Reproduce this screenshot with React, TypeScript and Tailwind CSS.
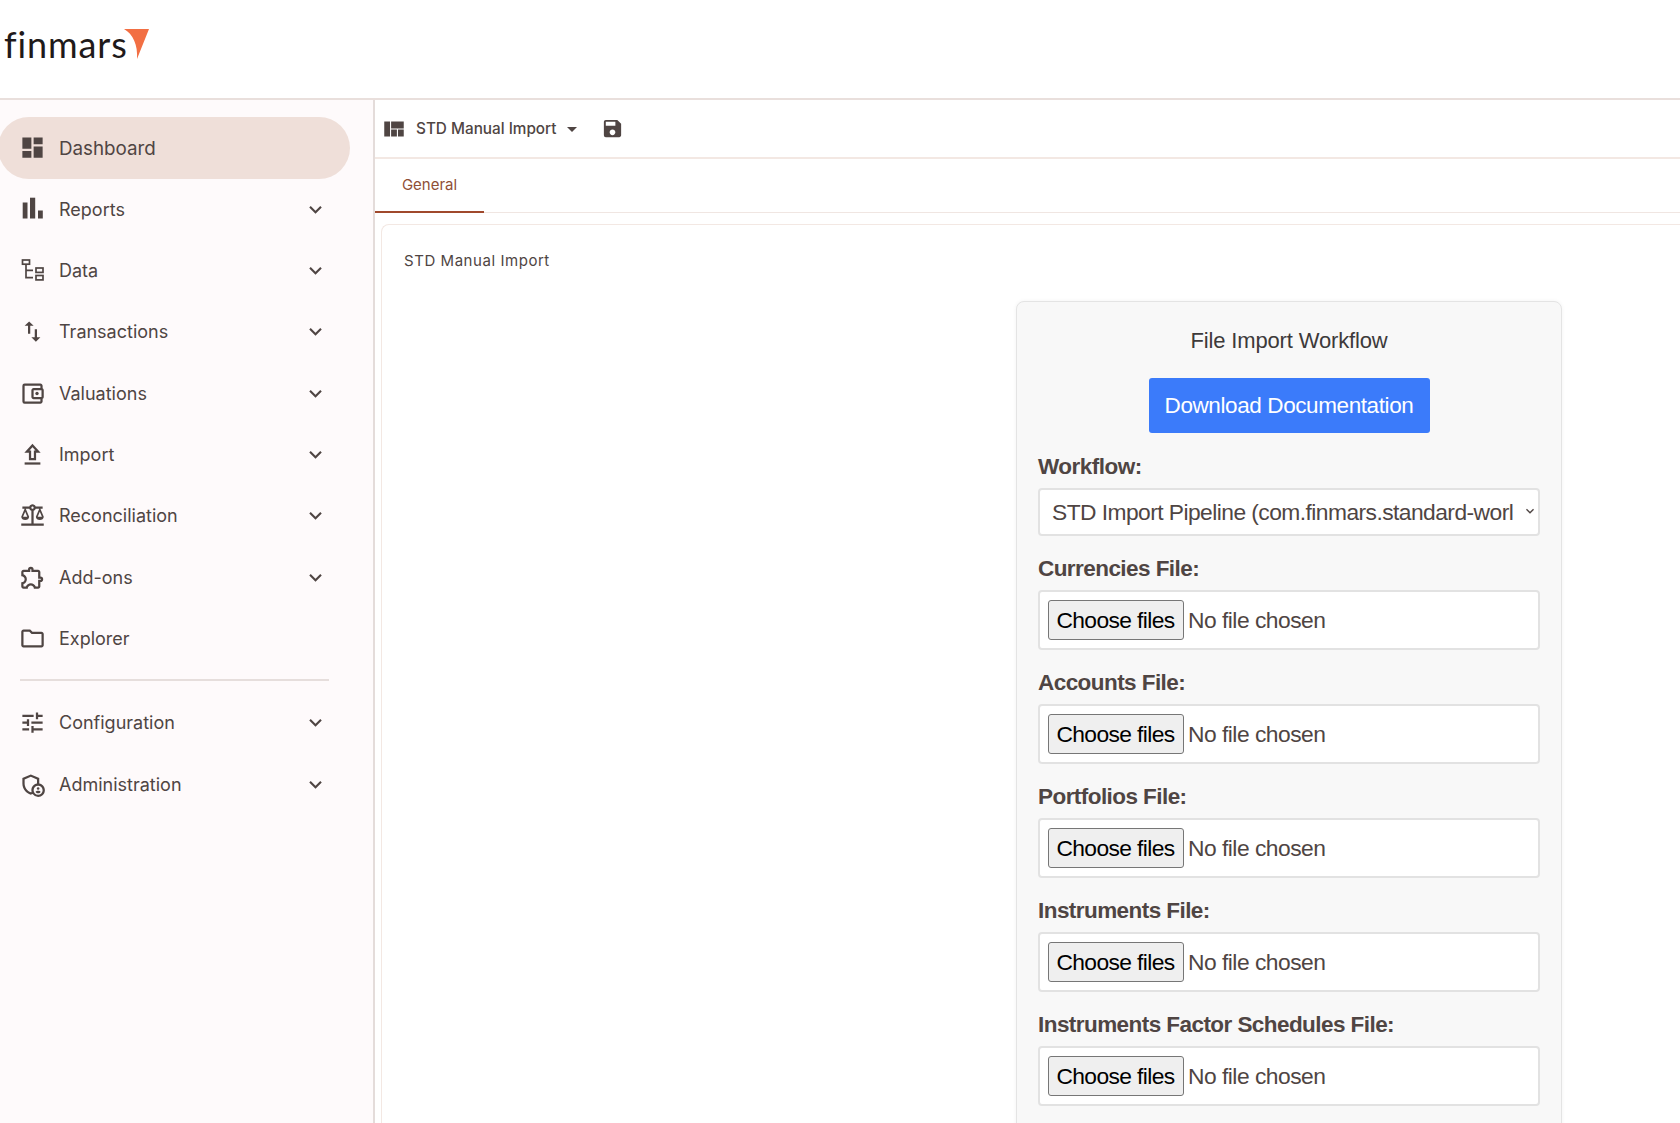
import {
  MdArrowDropDown,
  MdDashboard,
  MdKeyboardArrowDown,
  MdOutlineAccountBalanceWallet,
  MdOutlineAdminPanelSettings,
  MdOutlineBalance,
  MdOutlineExtension,
  MdOutlineFolder,
  MdOutlineTune,
  MdSave,
  MdSwapVert,
  MdViewQuilt,
} from "react-icons/md";
import type { ComponentType } from "react";

type IconType = ComponentType<{ className?: string }>;

function BarsIcon({ className }: { className?: string }) {
  return (
    <svg viewBox="0 0 27 27" className={className} fill="currentColor">
      <rect x="3.7" y="6.5" width="4.8" height="16" />
      <rect x="11" y="1.7" width="5.2" height="20.8" />
      <rect x="19" y="14.5" width="4.8" height="8" />
    </svg>
  );
}

function TreeIcon({ className }: { className?: string }) {
  return (
    <svg viewBox="0 0 27 27" className={className} fill="none" stroke="currentColor" strokeWidth="1.7">
      <rect x="3.5" y="3" width="7" height="4.2" />
      <path d="M7 7.2V20.7h7M7 13.3h7" />
      <rect x="17" y="11" width="7" height="4.4" />
      <rect x="17" y="18.5" width="7" height="4.4" />
    </svg>
  );
}

function UploadIcon({ className }: { className?: string }) {
  return (
    <svg viewBox="0 0 24 24" className={className} fill="none" stroke="currentColor" strokeWidth="2">
      <path d="M12 4 17 9.5h-2.8v6.5H9.8V9.5H7z" />
      <path d="M5 20h14" />
    </svg>
  );
}

const mainItems: { label: string; icon: IconType; caret?: boolean }[] = [
  { label: "Reports", icon: BarsIcon, caret: true },
  { label: "Data", icon: TreeIcon, caret: true },
  { label: "Transactions", icon: MdSwapVert, caret: true },
  { label: "Valuations", icon: MdOutlineAccountBalanceWallet, caret: true },
  { label: "Import", icon: UploadIcon, caret: true },
  { label: "Reconciliation", icon: MdOutlineBalance, caret: true },
  { label: "Add-ons", icon: MdOutlineExtension, caret: true },
  { label: "Explorer", icon: MdOutlineFolder },
];

const bottomItems: { label: string; icon: IconType; caret?: boolean }[] = [
  { label: "Configuration", icon: MdOutlineTune, caret: true },
  { label: "Administration", icon: MdOutlineAdminPanelSettings, caret: true },
];

const fileFields = [
  "Currencies File:",
  "Accounts File:",
  "Portfolios File:",
  "Instruments File:",
  "Instruments Factor Schedules File:",
];

function NavItem({ label, icon: Icon, caret }: { label: string; icon: IconType; caret?: boolean }) {
  return (
    <a className="flex h-[61.35px] items-center pl-[19px] pr-[45px] text-[18px] text-[#4f4543]">
      <Icon className="h-[27px] w-[27px] shrink-0" />
      <span className="ml-[13px] flex-1">{label}</span>
      {caret ? <MdKeyboardArrowDown className="h-[25px] w-[25px]" /> : null}
    </a>
  );
}

function FileField({ label }: { label: string }) {
  return (
    <div className="mt-[19.5px]">
      <label className="block h-[28px] text-[22.5px] font-bold leading-[28px] tracking-[-0.56px] text-[#4f4543]">
        {label}
      </label>
      <div className="mt-[7px] flex h-[59.5px] items-center rounded-[4px] border-2 border-[#e2e2e2] bg-white pl-[8px]">
        <button
          type="button"
          className="h-[40px] w-[136px] rounded-[3px] border border-[#767676] bg-[#efefef] pr-[1px] text-[22.8px] tracking-[-0.6px] text-black"
        >
          Choose files
        </button>
        <span className="ml-[4px] text-[22.8px] tracking-[-0.5px] text-[#4f4543]">No file chosen</span>
      </div>
    </div>
  );
}

export default function App() {
  return (
    <div className="flex h-[1123px] flex-col overflow-hidden bg-white font-['Inter',sans-serif]">
      <header className="flex h-[100px] shrink-0 items-start border-b-2 border-[#e9dfdc] pl-[4px] pt-[22px]">
        <span className="font-['Lato',sans-serif] text-[36px] leading-[44px] tracking-[0.9px] text-[#1f1a1a]">
          finmars
        </span>
        <svg viewBox="0 0 25 30" className="-ml-[4px] mt-[7px] h-[30px] w-[25px]">
          <path d="M0 0H25L13 30C14 16 9 5 0 0z" fill="#f26f43" />
        </svg>
      </header>

      <div className="flex min-h-0 flex-1">
        <aside className="w-[375px] shrink-0 border-r-2 border-[#e4dcda] bg-[#fefafb] pt-[17px]">
          <a className="-ml-[2px] flex h-[61.5px] w-[352px] items-center rounded-[31px] bg-[#efdfd9] pl-[21px] pt-[2px] text-[18.8px] text-[#4f4543]">
            <MdDashboard className="-mt-[2px] h-[27px] w-[27px]" />
            <span className="ml-[13px]">Dashboard</span>
          </a>
          {mainItems.map((item) => (
            <NavItem key={item.label} {...item} />
          ))}
          <div className="mb-[11.5px] ml-[20px] mt-[9.5px] h-[2px] w-[309px] bg-[#e6dedc]" />
          {bottomItems.map((item) => (
            <NavItem key={item.label} {...item} />
          ))}
        </aside>

        <main className="min-w-0 flex-1">
          <div className="flex h-[59px] items-center border-b-2 border-[#f3e8e3] pl-[6px] text-[15.3px] font-medium text-[#4f4543]">
            <MdViewQuilt className="h-[26px] w-[26px]" />
            <span className="ml-[9px] pt-[1px]">STD Manual Import</span>
            <MdArrowDropDown className="ml-[3px] h-[24px] w-[24px]" />
            <MdSave className="mb-[1px] ml-[17px] h-[23px] w-[23px]" />
          </div>

          <div className="h-[54px] border-b border-[#f0e6e2]">
            <div className="flex h-[54px] w-[109px] items-center justify-center border-b-2 border-[#a0492c] pt-[1px] text-[15px] text-[#8f4f37]">
              General
            </div>
          </div>

          <section className="ml-[6px] mt-[11px] h-[1000px] rounded-tl-[8px] border-l border-t border-[#f3e8e3] pl-[22px] pt-[26px]">
            <h2 className="text-[15px] leading-[20px] tracking-[0.55px] text-[#4f4543]">STD Manual Import</h2>
            <div className="ml-[612px] mt-[30px] w-[546px] rounded-[8px] border border-[#e4e4e4] bg-[#f8f8f8] px-[21px] pb-[40px] pt-[25px] font-['Liberation_Sans',sans-serif] shadow-[0_0_4px_rgba(0,0,0,0.05)]">
              <h3 className="text-center text-[22px] leading-[28px] tracking-[-0.15px] text-[#3d3a3a]">
                File Import Workflow
              </h3>
              <div className="mt-[23px] flex justify-center">
                <button
                  type="button"
                  className="h-[55px] w-[281px] rounded-[3px] bg-[#3b7bfa] text-[22.5px] tracking-[-0.4px] text-white"
                >
                  Download Documentation
                </button>
              </div>
              <label className="mt-[20px] block h-[28px] text-[22.5px] font-bold leading-[28px] tracking-[-0.5px] text-[#4f4543]">
                Workflow:
              </label>
              <div className="relative mt-[7px]">
                <select className="h-[47.5px] w-full appearance-none rounded-[4px] border-2 border-[#e2e2e2] bg-white pl-[12px] pr-[22px] text-[22.8px] tracking-[-0.55px] text-[#4f4543]">
                  <option>STD Import Pipeline (com.finmars.standard-worl</option>
                </select>
                <MdKeyboardArrowDown className="pointer-events-none absolute right-[2px] top-[15px] h-[16px] w-[16px] text-[#4f4543]" />
              </div>
              {fileFields.map((label) => (
                <FileField key={label} label={label} />
              ))}
            </div>
          </section>
        </main>
      </div>
    </div>
  );
}
